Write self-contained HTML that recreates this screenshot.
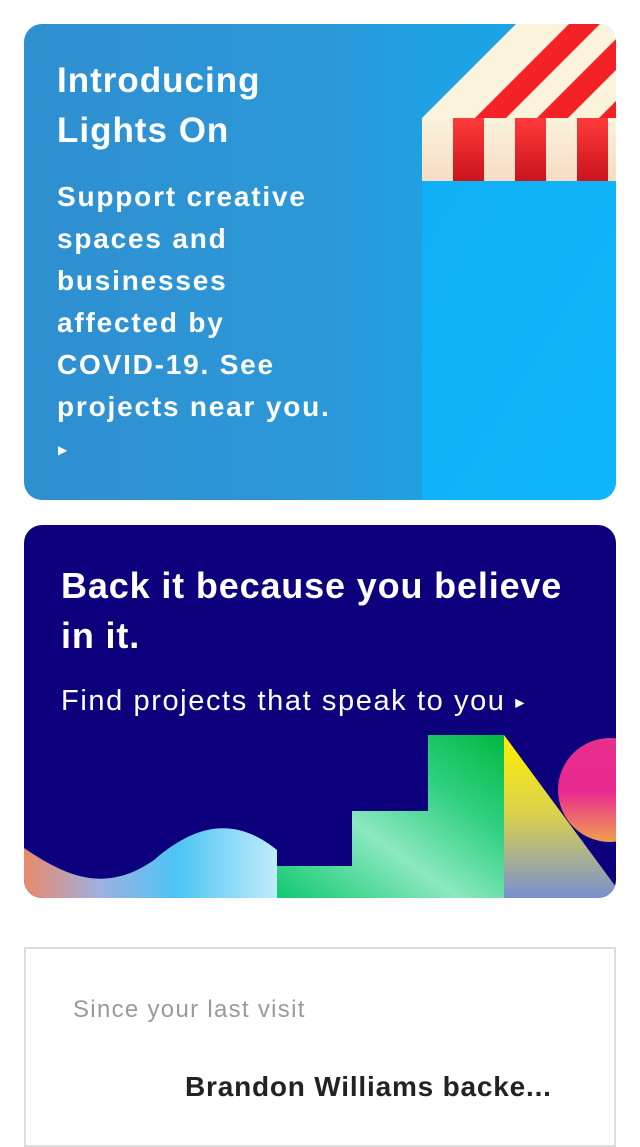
<!DOCTYPE html>
<html><head><meta charset="utf-8"><style>
*{margin:0;padding:0;box-sizing:border-box}
body{width:640px;height:1136px;background:#fff;position:relative;overflow:hidden;font-family:"Liberation Sans",sans-serif}
.t{position:absolute;white-space:nowrap;line-height:1}
#c1{position:absolute;left:24px;top:24px;width:592px;height:476px;border-radius:18px;overflow:hidden;background:linear-gradient(90deg,#2f8fd0 0%,#2c98d8 50%,#1ea2e2 70%,#18a6e6 100%)}
#c2{position:absolute;left:24px;top:525px;width:592px;height:373px;border-radius:18px;overflow:hidden;background:#0c007c}
#c3{position:absolute;left:24px;top:947px;width:592px;height:200px;border:2px solid #dedede}
</style></head><body>
<div id="c1">
<svg width="592" height="476" style="position:absolute;left:0;top:0">
<defs>
<linearGradient id="bl" x1="0" y1="0" x2="1" y2="1"><stop offset="0" stop-color="#10b0f6"/><stop offset="1" stop-color="#0fb6fb"/></linearGradient>
<linearGradient id="rd" x1="0" y1="0" x2="0" y2="1"><stop offset="0" stop-color="#ff3a3a"/><stop offset="1" stop-color="#c8141c"/></linearGradient>
<linearGradient id="cr" x1="0" y1="0" x2="0" y2="1"><stop offset="0" stop-color="#fbf3dc"/><stop offset="1" stop-color="#f7dcc4"/></linearGradient>
<clipPath id="tri"><polygon points="398,94 492,0 592,0 592,94"/></clipPath>
</defs>
<rect x="398" y="157" width="194" height="319" fill="url(#bl)"/>
<g clip-path="url(#tri)">
<rect x="398" y="0" width="194" height="94" fill="#fbf3dc"/>
<g transform="skewX(-45)">
<rect x="545" y="0" width="31" height="94" fill="#f42226"/>
<rect x="607" y="0" width="31" height="94" fill="#f42226"/>
<rect x="669" y="0" width="31" height="94" fill="#f42226"/>
</g>
</g>
<rect x="398" y="94" width="194" height="63" fill="url(#cr)"/>
<rect x="429" y="94" width="31" height="63" fill="url(#rd)"/>
<rect x="491" y="94" width="31" height="63" fill="url(#rd)"/>
<rect x="553" y="94" width="31" height="63" fill="url(#rd)"/>
</svg>
</div>
<div class="t" style="left:57px;top:63px;font-size:35px;font-weight:bold;letter-spacing:1px;color:#fff">Introducing</div>
<div class="t" style="left:57px;top:113px;font-size:35px;font-weight:bold;letter-spacing:1px;color:#fff">Lights On</div>
<div style="position:absolute;left:57px;top:176px;font-size:28px;line-height:42px;font-weight:bold;letter-spacing:1.8px;color:#fff;width:340px">Support creative<br>spaces and<br>businesses<br>affected by<br>COVID-19. See<br>projects near you.</div>
<div class="t" style="left:58px;top:444px;font-size:12px;color:#fff">▶</div>

<div id="c2">
<svg width="592" height="373" style="position:absolute;left:0;top:0">
<defs>
<linearGradient id="wv" x1="0" y1="0" x2="1" y2="0"><stop offset="0" stop-color="#e88a6a"/><stop offset=".3" stop-color="#9fb0e0"/><stop offset=".6" stop-color="#4cc4f4"/><stop offset="1" stop-color="#c0ecfc"/></linearGradient>
<linearGradient id="gr" x1="0" y1="1" x2="1" y2="0"><stop offset="0" stop-color="#10c870"/><stop offset=".4" stop-color="#8ce8c0"/><stop offset=".7" stop-color="#30d080"/><stop offset="1" stop-color="#00b840"/></linearGradient>
<linearGradient id="yl" x1="0" y1="0" x2="0" y2="1"><stop offset="0" stop-color="#fff000"/><stop offset=".5" stop-color="#d8d050"/><stop offset="1" stop-color="#7890d0"/></linearGradient>
<linearGradient id="pk" x1="0" y1="0" x2="0" y2="1"><stop offset="0" stop-color="#e8308c"/><stop offset=".5" stop-color="#e82890"/><stop offset="1" stop-color="#f0a050"/></linearGradient>
</defs>
<path d="M0 323 C40 350,80 370,130 335 C170 300,210 290,253 325 L253 373 L0 373Z" fill="url(#wv)"/>
<path d="M253 341 L328 341 L328 286 L404 286 L404 210 L480 210 L480 373 L253 373Z" fill="url(#gr)"/>
<polygon points="480,210 592,362 592,373 480,373" fill="url(#yl)"/>
<circle cx="586" cy="265" r="52" fill="url(#pk)"/>
</svg>
</div>
<div class="t" style="left:61px;top:568px;font-size:36px;font-weight:bold;letter-spacing:0.85px;color:#fff">Back it because you believe</div>
<div class="t" style="left:61px;top:618px;font-size:36px;font-weight:bold;letter-spacing:0.85px;color:#fff">in it.</div>
<div class="t" style="left:61px;top:687px;font-size:29px;letter-spacing:1.6px;color:#fff">Find projects that speak to you <span style="font-size:12px;vertical-align:middle;letter-spacing:0">▶</span></div>

<div id="c3"></div>
<div class="t" style="left:73px;top:998px;font-size:24px;letter-spacing:1.3px;color:#9a9a9a">Since your last visit</div>
<div class="t" style="left:185px;top:1073px;font-size:28px;font-weight:bold;letter-spacing:0.8px;color:#222">Brandon Williams backe...</div>
</body></html>
